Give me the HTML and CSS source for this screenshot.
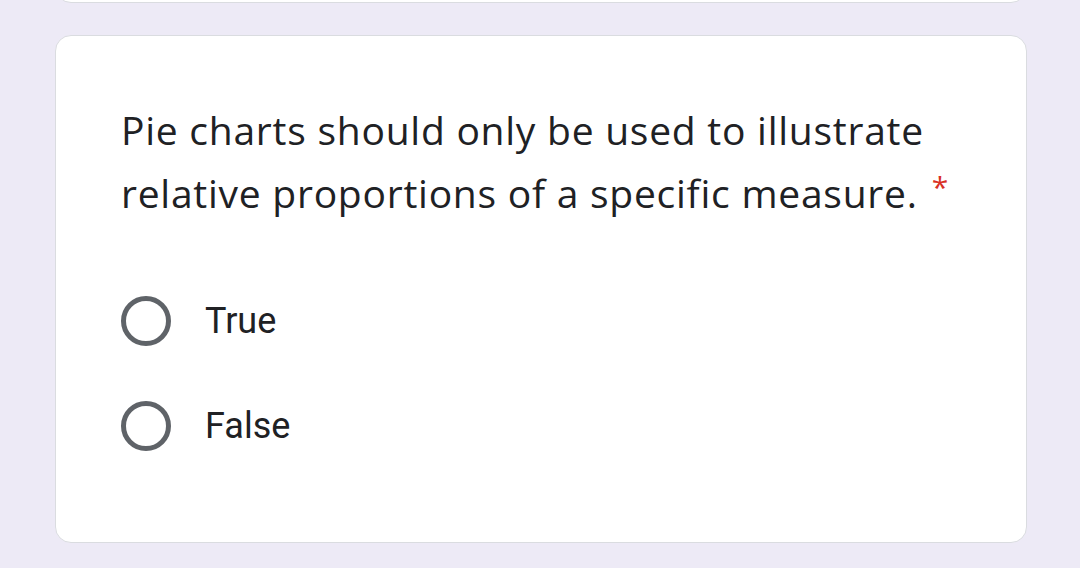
FILE: index.html
```html
<!DOCTYPE html>
<html>
<head>
<meta charset="utf-8">
<link rel="stylesheet" href="styles.css">
</head>
<body>
<div class="page">
  <div class="card card-prev"></div>
  <div class="card question">
    <div class="title">Pie charts should only be used to illustrate relative proportions of a specific measure.<span class="req">*</span></div>
    <div class="options">
      <label class="option"><span class="radio"></span><span class="label">True</span></label>
      <label class="option"><span class="radio"></span><span class="label">False</span></label>
    </div>
  </div>
</div>
</body>
</html>
```
FILE: styles.css
```css
html, body {
  margin: 0;
  padding: 0;
  background: #edeaf6;
  height: 100%;
  overflow: hidden;
}
.page {
  display: flex;
  flex-direction: column;
  gap: 32px;
  padding: 0 53px 0 55px;
  margin-top: -97px;
}
.card {
  background: #fff;
  border: 1px solid #dadce0;
  border-radius: 16px;
  box-sizing: border-box;
}
.card-prev {
  height: 100px;
}
.question {
  height: 508px;
  padding: 62px 40px 0 65px;
}
.title {
  font-family: "Open Sans", "Liberation Sans", sans-serif;
  font-size: 39px;
  line-height: 63px;
  color: #202124;
  letter-spacing: 0.75px;
}
.req {
  color: #d93025;
  margin-left: 14px;
  font-size: 30px;
  vertical-align: top;
  position: relative;
  top: -6px;
}
.options {
  margin-top: 72px;
  display: flex;
  flex-direction: column;
  gap: 55px;
}
.option {
  display: flex;
  align-items: center;
  gap: 34px;
}
.radio {
  width: 50px;
  height: 50px;
  border: 5px solid #5f6368;
  border-radius: 50%;
  box-sizing: border-box;
}
.label {
  font-family: Roboto, "Liberation Sans", sans-serif;
  font-size: 36px;
  color: #202124;
}
```
